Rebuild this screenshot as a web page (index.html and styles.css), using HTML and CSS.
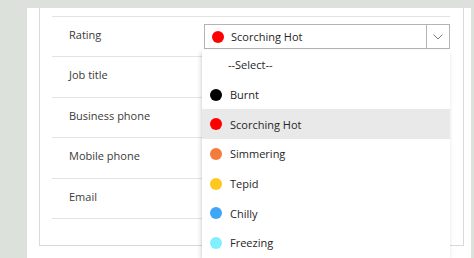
FILE: index.html
```html
<!DOCTYPE html>
<html lang="en">
<head>
    <meta charset="UTF-8">
    <title>Contact - Rating</title>
    <link rel="stylesheet" href="styles.css">
</head>
<body>
    <div class="panel">
        <div class="card">
            <div class="form-row">
                <div class="label">Rating</div>
                <div class="field">
                    <div class="select">
                        <span class="dot hot"></span>
                        <span class="select-text">Scorching Hot</span>
                        <span class="chevron">
                            <svg width="10" height="6" viewBox="0 0 10 6"><path d="M0.5 0.5 L5 5 L9.5 0.5" fill="none" stroke="#7a7a7a" stroke-width="1"/></svg>
                        </span>
                    </div>
                    <ul class="options">
                        <li class="option plain">--Select--</li>
                        <li class="option"><span class="dot burnt"></span>Burnt</li>
                        <li class="option active"><span class="dot hot"></span>Scorching Hot</li>
                        <li class="option"><span class="dot simmer"></span>Simmering</li>
                        <li class="option"><span class="dot tepid"></span>Tepid</li>
                        <li class="option"><span class="dot chilly"></span>Chilly</li>
                        <li class="option"><span class="dot freeze"></span>Freezing</li>
                    </ul>
                </div>
            </div>
            <div class="form-row"><div class="label">Job title</div></div>
            <div class="form-row"><div class="label">Business phone</div></div>
            <div class="form-row"><div class="label">Mobile phone</div></div>
            <div class="form-row last"><div class="label">Email</div></div>
        </div>
    </div>
</body>
</html>
```

FILE: styles.css
```css
body {
    margin: 0;
    background-color: #dde1dc;
    font-family: 'Open Sans', 'Noto Sans', sans-serif;
    font-size: 11px;
    color: #3a3a3a;
    overflow: hidden;
}
.panel {
    margin: 8px 3px 0 27px;
    height: 250px;
    background-color: white;
    padding: 0 7px 0 12px;
}
.card {
    border: 1px solid #d9d9d9;
    border-top: none;
    padding: 8px 13px 26px 12px;
}
.form-row {
    display: grid;
    grid-template-columns: 152px 1fr;
    height: 40.4px;
    box-sizing: border-box;
    border-top: 1px solid #e3e3e3;
}
.form-row.last {
    border-bottom: 1px solid #e3e3e3;
    height: 41.4px;
}
.label {
    padding: 10px 0 0 17px;
    line-height: 16px;
}
.field {
    position: relative;
    padding-top: 7px;
}
.select {
    display: flex;
    align-items: center;
    height: 25px;
    box-sizing: border-box;
    border: 1px solid #b3b3b3;
    color: #262626;
}
.select .dot {
    margin: 0 7px 0 7px;
}
.select-text {
    flex: 1;
}
.chevron {
    width: 22px;
    height: 100%;
    border-left: 1px solid #b3b3b3;
    display: flex;
    align-items: center;
    justify-content: center;
}
.dot {
    display: inline-block;
    width: 12px;
    height: 12px;
    border-radius: 50%;
}
.burnt { background-color: #000; }
.hot { background-color: #ff0000; }
.simmer { background-color: #f47b3a; }
.tepid { background-color: #ffc81f; }
.chilly { background-color: #3ea6f5; }
.freeze { background-color: #80f0ff; }
.options {
    position: absolute;
    top: 33px;
    left: -2px;
    right: 0;
    margin: 0;
    padding: 0;
    list-style: none;
    background-color: white;
    box-shadow: -1px 2px 4px rgba(0, 0, 0, 0.18);
    z-index: 10;
}
.option {
    display: flex;
    align-items: center;
    height: 29.7px;
    color: #262626;
}
.option .dot {
    margin: 0 8px 0 8px;
}
.option.plain {
    padding-left: 26px;
}
.option.active {
    background-color: #e9e9e9;
}
```
